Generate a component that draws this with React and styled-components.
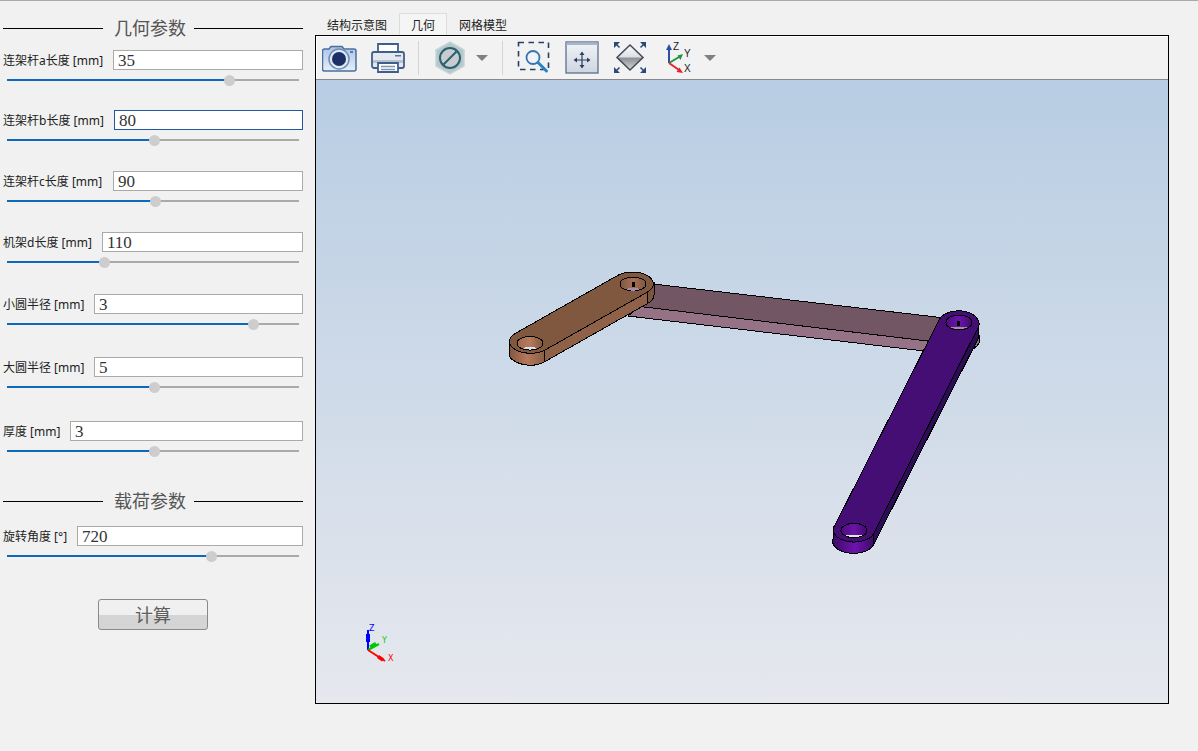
import styled, { createGlobalStyle } from "styled-components";

const geometryFields = [
  { label: "连架杆a长度 [mm]", value: "35", thumb: 222, gap: 12, labelWidth: 110 },
  { label: "连架杆b长度 [mm]", value: "80", thumb: 147, gap: 22, labelWidth: 111, focused: true },
  { label: "连架杆c长度 [mm]", value: "90", thumb: 148, gap: 23, labelWidth: 110 },
  { label: "机架d长度 [mm]", value: "110", thumb: 97, gap: 23, labelWidth: 99 },
  { label: "小圆半径 [mm]", value: "3", thumb: 246, gap: 24, labelWidth: 91 },
  { label: "大圆半径 [mm]", value: "5", thumb: 147, gap: 25, labelWidth: 91 },
  { label: "厚度 [mm]", value: "3", thumb: 147, gap: 26, labelWidth: 67 },
];

function Field({ label, value, thumb, gap, labelWidth, focused }) {
  return (
    <FieldBox $gap={gap}>
      <FieldRow>
        <FieldLabel $width={labelWidth}>{label}</FieldLabel>
        <FieldInput $focused={focused} defaultValue={value} readOnly />
      </FieldRow>
      <Slider>
        <SliderFill style={{ width: thumb }} />
        <SliderThumb style={{ left: thumb - 5.5 }} />
      </Slider>
    </FieldBox>
  );
}

function CameraIcon() {
  return (
    <svg width="36" height="30" viewBox="0 0 36 30">
      <defs>
        <linearGradient id="camBody" x1="0" y1="0" x2="0" y2="1">
          <stop offset="0" stopColor="#a9c3e6" />
          <stop offset="1" stopColor="#e6eef8" />
        </linearGradient>
      </defs>
      <path d="M2 6h5l2-2.500h11l2 2.500h10a2 2 0 0 1 2 2v18a2 2 0 0 1-2 2H2.500a2 2 0 0 1-2-2V8a2 2 0 0 1 2-2z" fill="url(#camBody)" stroke="#4a6f9c" strokeWidth="1.500" />
      <rect x="28" y="8" width="3" height="2" fill="#5b7ea8" />
      <circle cx="17" cy="16" r="10" fill="#dfe8f3" stroke="#6f8db3" strokeWidth="1.500" />
      <circle cx="17" cy="16" r="7" fill="#1c2f66" />
    </svg>
  );
}

function PrinterIcon() {
  return (
    <svg width="34" height="32" viewBox="0 0 34 32">
      <path d="M7 12V2h20v10" fill="#fff" stroke="#3f5f8a" strokeWidth="1.800" />
      <path d="M3 10h28a2 2 0 0 1 2 2v12a2 2 0 0 1-2 2H3a2 2 0 0 1-2-2V12a2 2 0 0 1 2-2z" fill="#e4e9f1" stroke="#3f5f8a" strokeWidth="1.800" />
      <rect x="2" y="18" width="30" height="3" fill="#b9c3d0" />
      <rect x="24" y="13" width="6" height="1.500" fill="#5b7399" />
      <path d="M7 21h20v9H7z" fill="#fff" stroke="#3f5f8a" strokeWidth="1.800" />
      <path d="M10 24.500h14M10 27.500h14" stroke="#7f93ad" strokeWidth="1.300" />
    </svg>
  );
}

function HexIcon() {
  return (
    <svg width="30" height="34" viewBox="0 0 30 34">
      <path d="M15 1l14 8v16l-14 8-14-8V9z" fill="#b4c8ca" stroke="#c6d5d6" strokeWidth="1.500" />
      <circle cx="15" cy="17" r="10" fill="#c8ccce" stroke="#2a6070" strokeWidth="2" />
      <path d="M8.500 23.500l13-13" stroke="#2a6070" strokeWidth="2" />
    </svg>
  );
}

function CaretIcon() {
  return (
    <svg width="12" height="6" viewBox="0 0 12 6">
      <path d="M0 0h12l-6 6z" fill="#808080" />
    </svg>
  );
}

function ZoomBoxIcon() {
  return (
    <svg width="34" height="33" viewBox="0 0 34 33">
      <rect x="1.500" y="1.500" width="30" height="27" fill="none" stroke="#2b3f66" strokeWidth="1.600" strokeDasharray="5.500 4.500" />
      <circle cx="16" cy="16.500" r="6.500" fill="#eef4fa" stroke="#3a74b0" strokeWidth="1.800" />
      <path d="M21 21.500l8.500 8.500" stroke="#2a83c4" strokeWidth="3" strokeLinecap="round" />
    </svg>
  );
}

function PanIcon() {
  return (
    <svg width="34" height="33" viewBox="0 0 34 33">
      <defs>
        <linearGradient id="panFill" x1="0" y1="0" x2="0" y2="1">
          <stop offset="0" stopColor="#f1f3f7" />
          <stop offset="1" stopColor="#cfd5e0" />
        </linearGradient>
      </defs>
      <rect x="1" y="1" width="32" height="31" fill="url(#panFill)" stroke="#5a6f8e" strokeWidth="1.300" />
      <rect x="1.500" y="1.500" width="31" height="2.500" fill="#a7b6cb" />
      <path d="M17 13v12M11 19h12" stroke="#2a4062" strokeWidth="1.200" />
      <path d="M17 10.500l2.500 3.500h-5zM17 27.500l2.500-3.500h-5zM8.500 19l3.500-2.500v5zM25.500 19l-3.500-2.500v5z" fill="#2a4062" />
    </svg>
  );
}

function FitIcon() {
  return (
    <svg width="34" height="33" viewBox="0 0 34 33">
      <defs>
        <linearGradient id="fitLow" x1="0" y1="0" x2="0" y2="1">
          <stop offset="0" stopColor="#8a8d91" />
          <stop offset="1" stopColor="#d6d8da" />
        </linearGradient>
        <linearGradient id="fitHigh" x1="0" y1="0" x2="0" y2="1">
          <stop offset="0" stopColor="#fbfbfc" />
          <stop offset="1" stopColor="#dcdee1" />
        </linearGradient>
      </defs>
      <path d="M17 4l13 12.500H4z" fill="url(#fitHigh)" />
      <path d="M4 16.500h26L17 29z" fill="url(#fitLow)" />
      <path d="M17 4l13 12.500L17 29 4 16.500z" fill="none" stroke="#3f4a5c" strokeWidth="1.500" />
      <path d="M1 1h6L1 7zM33 1h-6L33 7zM1 32h6L1 26zM33 32h-6L33 26z" fill="#2c4a75" />
      <path d="M3 3l3.500 3.500M31 3l-3.500 3.500M3 30l3.500-3.500M31 30l-3.500-3.500" stroke="#2c4a75" strokeWidth="1.500" />
    </svg>
  );
}

function AxisIcon() {
  return (
    <svg width="28" height="33" viewBox="0 0 28 33">
      <path d="M5 22V7" stroke="#2b4fa8" strokeWidth="2" />
      <path d="M5 3l3 6H2z" fill="#2b4fa8" />
      <path d="M5 22l10-6" stroke="#1f9440" strokeWidth="2" />
      <path d="M19 13l-2.500 6-3-4.500z" fill="#1f9440" />
      <path d="M5 22l10 7" stroke="#e0242c" strokeWidth="2" />
      <path d="M19 32l-6.500-1 3-4.500z" fill="#e0242c" />
      <IconText x="9" y="9">Z</IconText>
      <IconText x="20" y="16">Y</IconText>
      <IconText x="20" y="31">X</IconText>
    </svg>
  );
}

function Model() {
  return (
    <ModelSvg viewBox="316 80 852 623" preserveAspectRatio="none">
      <defs>
        <linearGradient id="brownEnd" x1="0" y1="0" x2="1" y2="0">
          <stop offset="0" stopColor="#7e5640" />
          <stop offset="0.5" stopColor="#b6785b" />
          <stop offset="1" stopColor="#8a5e46" />
        </linearGradient>
        <linearGradient id="brownHole" x1="0" y1="0" x2="1" y2="0">
          <stop offset="0" stopColor="#a06a50" />
          <stop offset="0.5" stopColor="#b87a5c" />
          <stop offset="1" stopColor="#7e5640" />
        </linearGradient>
        <linearGradient id="brownHoleBack" x1="0" y1="0" x2="1" y2="0">
          <stop offset="0" stopColor="#7e5640" />
          <stop offset="0.5" stopColor="#a87055" />
          <stop offset="1" stopColor="#7e5640" />
        </linearGradient>
        <linearGradient id="purpleEnd" x1="0" y1="0" x2="1" y2="0">
          <stop offset="0" stopColor="#3c0b68" />
          <stop offset="0.55" stopColor="#6d13ad" />
          <stop offset="1" stopColor="#3c0b68" />
        </linearGradient>
        <linearGradient id="purpleHole" x1="0" y1="0" x2="1" y2="0">
          <stop offset="0" stopColor="#4e0d80" />
          <stop offset="0.5" stopColor="#6a14a8" />
          <stop offset="1" stopColor="#3f0c6c" />
        </linearGradient>
      </defs>

      <g shapeRendering="crispEdges" stroke="#000" strokeWidth="1">
        {/* frame link behind the others */}
        <ellipse cx="960" cy="339" rx="20" ry="13" fill="#807272" />
        <path d="M628 316L640 306L945 342L921.700 350.700z" fill="#967287" />
        <path d="M640 282.500L945 318L940 342.500L640 306.500z" fill="#725664" />

        {/* brown link */}
        <path d="M512 342V353.300A21 11.800 0 0 0 544.900 361.600L647.900 303.300A21 11.800 0 0 0 654 295V283.500z" fill="#8e6148" stroke="none" />
        <path d="M509 341.800V353.300A21 11.800 0 0 0 544.900 361.600V350.100z" fill="url(#brownEnd)" />
        <path d="M544.900 350.100V361.600L647.900 303.300V291.800z" fill="#8e6148" />
        <path d="M647.900 291.800V303.300A21 11.800 0 0 0 654 295V283.500z" fill="#7d5540" />
        <path d="M515.100 333.500L618.100 275.200A21 11.800 0 0 1 647.900 291.800L544.900 350.100A21 11.800 0 0 1 515.100 333.500z" fill="#80583f" />
        <ellipse cx="530" cy="343.300" rx="13" ry="6.800" fill="url(#brownHole)" />
        <path d="M522 348A13 6.800 0 0 0 538 348A14 4 0 0 0 522 348z" fill="#d6e1ec" stroke="none" />
        <ellipse cx="633" cy="284" rx="13" ry="7" fill="url(#brownHoleBack)" />
        <path d="M625 289A13 7 0 0 0 641 289A14 4 0 0 0 625 289z" fill="#a78ba6" stroke="none" />
        <rect x="632" y="282" width="3" height="4.500" fill="#000" stroke="none" />

        {/* purple link */}
        <path d="M978.600 326.700V337.700L873.600 544.700A20.500 12 0 0 1 834.400 537.300V526.300z" fill="#2b0d55" />
        <path d="M833.500 526.300V537.300A20.500 12 0 0 0 873.600 544.700V533.700z" fill="url(#purpleEnd)" />
        <path d="M939.400 319.300A20.500 13 0 0 1 978.600 326.700L873.600 533.700A20.500 12 0 0 1 834.400 526.300z" fill="#440e75" />
        <ellipse cx="854" cy="530.500" rx="13" ry="7.200" fill="url(#purpleHole)" />
        <path d="M846 535.500A13 7.200 0 0 0 862 535.500A14 4 0 0 0 846 535.500z" fill="#dde5ee" stroke="none" />
        <ellipse cx="959" cy="322.500" rx="13" ry="7.500" fill="url(#purpleHole)" />
        <path d="M951 327.500A13 7.500 0 0 0 967 327.500A14 4 0 0 0 951 327.500z" fill="#a78ba6" stroke="none" />
        <rect x="957" y="321" width="3" height="5" fill="#000" stroke="none" />
      </g>

      {/* view triad */}
      <path d="M368 650V630" stroke="#0000ff" strokeWidth="2" />
      <rect x="366" y="634" width="4" height="8" fill="#0000ff" />
      <path d="M368 650L379 644" stroke="#00c800" strokeWidth="2" />
      <path d="M370 647L376 643.500" stroke="#00c800" strokeWidth="3.500" />
      <path d="M368 650L385 661" stroke="#ff0000" strokeWidth="2" />
      <path d="M378 656.500L383 660" stroke="#ff0000" strokeWidth="3.500" />
      <TriadText x="369" y="631" fill="#0000ff">Z</TriadText>
      <TriadText x="382" y="643" fill="#00c800">Y</TriadText>
      <TriadText x="388" y="661" fill="#ff0000">X</TriadText>
    </ModelSvg>
  );
}

function App() {
  return (
    <>
      <GlobalStyle />
      <Page>
        <Sidebar>
          <SectionTitle $gap={17}><TitleText>几何参数</TitleText></SectionTitle>
          {geometryFields.map((f) => (
            <Field key={f.label} {...f} />
          ))}
          <SectionTitle $gap={32}><TitleText>载荷参数</TitleText></SectionTitle>
          <Field label="旋转角度 [°]" value="720" thumb={204} gap={15} labelWidth={74} />
          <CalcButton>计算</CalcButton>
        </Sidebar>
        <Main>
          <Tabs>
            <Tab>结构示意图</Tab>
            <Tab $active>几何</Tab>
            <Tab>网格模型</Tab>
          </Tabs>
          <Viewport>
            <Toolbar>
              <ToolButton><CameraIcon /></ToolButton>
              <ToolButton><PrinterIcon /></ToolButton>
              <ToolSep $left={6} $right={7} />
              <ToolButton><HexIcon /></ToolButton>
              <ToolCaret><CaretIcon /></ToolCaret>
              <ToolSep $left={12} $right={7} />
              <ToolButton><ZoomBoxIcon /></ToolButton>
              <ToolButton><PanIcon /></ToolButton>
              <ToolButton><FitIcon /></ToolButton>
              <ToolButton><AxisIcon /></ToolButton>
              <ToolCaret><CaretIcon /></ToolCaret>
            </Toolbar>
            <Canvas>
              <Model />
            </Canvas>
          </Viewport>
        </Main>
      </Page>
    </>
  );
}

export default App;

const GlobalStyle = createGlobalStyle`
  html, body {
    margin: 0;
    padding: 0;
    background: #f1f1f1;
  }
  * {
    box-sizing: border-box;
  }
`;

const Page = styled.div`
  display: flex;
  width: 1198px;
  height: 751px;
  overflow: hidden;
  border-top: 1px solid #aaaaaa;
  background: #f1f1f1;
  font-family: "Noto Sans", "Noto Sans CJK SC", sans-serif;
`;

const Sidebar = styled.div`
  display: flex;
  flex-direction: column;
  width: 315px;
  flex: none;
  padding: 0 12px 0 3px;
`;

const SectionTitle = styled.div`
  display: flex;
  align-items: center;
  height: 20px;
  margin-top: ${(p) => p.$gap}px;
  &::before,
  &::after {
    content: "";
    height: 1px;
    background: #000;
  }
  &::before {
    flex: none;
    width: 100px;
    margin-right: 11px;
  }
  &::after {
    flex: 1;
    margin-left: 8px;
  }
`;

const TitleText = styled.span`
  margin-bottom: 2px;
  font-family: "Noto Sans CJK SC", sans-serif;
  font-size: 18px;
  line-height: 20px;
  color: #555;
`;

const FieldBox = styled.div`
  margin-top: ${(p) => p.$gap}px;
  height: 38px;
`;

const FieldRow = styled.div`
  display: flex;
  align-items: center;
  height: 20px;
`;

const FieldLabel = styled.div`
  flex: none;
  width: ${(p) => p.$width}px;
  font-size: 12px;
  color: #222;
  white-space: nowrap;
`;

const FieldInput = styled.input`
  flex: 1;
  min-width: 0;
  height: 20px;
  padding: 1px 3px 0 4px;
  border: 1px solid ${(p) => (p.$focused ? "#1f5aa0" : "#aaaaaa")};
  border-radius: 0;
  outline: none;
  background: #fff;
  font-family: "Liberation Serif", serif;
  font-size: 17px;
  color: #333;
`;

const Slider = styled.div`
  position: relative;
  width: 292px;
  height: 2px;
  margin: 9px 0 0 4px;
  background: #aaaaaa;
`;

const SliderFill = styled.div`
  height: 2px;
  background: #0f69b8;
`;

const SliderThumb = styled.div`
  position: absolute;
  top: -4.5px;
  width: 11px;
  height: 11px;
  border-radius: 50%;
  background: #cdcdcd;
`;

const CalcButton = styled.button`
  align-self: center;
  width: 110px;
  height: 31px;
  margin-top: 35px;
  padding: 0 0 2px;
  border: 1px solid #8a8a8a;
  border-radius: 3px;
  background: linear-gradient(#f0f0f0 50%, #d5d5d5 50%);
  font-family: "Noto Sans CJK SC", sans-serif;
  font-size: 18px;
  color: #5e5e5e;
`;

const Main = styled.div`
  display: flex;
  flex-direction: column;
  width: 854px;
  flex: none;
  padding-top: 12px;
`;

const Tabs = styled.div`
  display: flex;
  height: 22px;
`;

const Tab = styled.div`
  padding: 0 ${(p) => (p.$active ? 11 : 12)}px;
  font-family: "Noto Sans CJK SC", sans-serif;
  font-size: 12px;
  line-height: 24px;
  color: #222;
  ${(p) =>
    p.$active &&
    `
    border: 1px solid #dcdcdc;
    border-bottom: none;
    background: #f5f5f5;
    line-height: 22px;
  `}
`;

const Viewport = styled.div`
  display: flex;
  flex-direction: column;
  height: 669px;
  border: 1px solid #000;
`;

const Toolbar = styled.div`
  display: flex;
  align-items: center;
  flex: none;
  height: 44px;
  border-bottom: 1px solid #888;
  background: #f2f2f2;
  box-shadow: inset 1px 1px 0 #fff;
`;

const ToolButton = styled.div`
  display: flex;
  align-items: center;
  justify-content: center;
  width: 48px;
  height: 34px;
`;

const ToolCaret = styled.div`
  display: flex;
  align-items: center;
  justify-content: center;
  width: 16px;
`;

const ToolSep = styled.div`
  width: 1px;
  height: 34px;
  margin: 0 ${(p) => p.$right}px 0 ${(p) => p.$left}px;
  background: #d4d4d4;
`;

const IconText = styled.text`
  font-family: "Liberation Sans", sans-serif;
  font-size: 10px;
  fill: #222;
`;

const Canvas = styled.div`
  flex: 1;
  min-height: 0;
  background: linear-gradient(#b8cde3, #e6e8ee);
`;

const ModelSvg = styled.svg`
  display: block;
  width: 100%;
  height: 100%;
`;

const TriadText = styled.text`
  font-family: "DejaVu Sans", sans-serif;
  font-size: 8px;
`;
